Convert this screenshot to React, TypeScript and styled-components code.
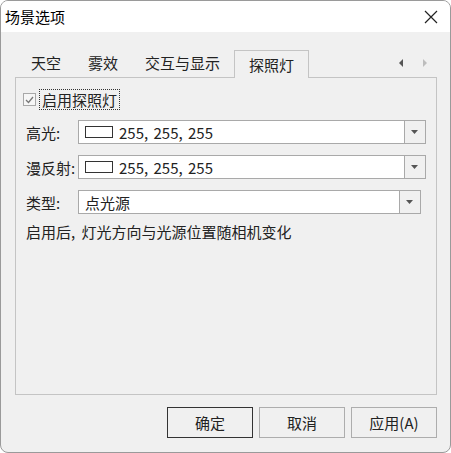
import styled, { createGlobalStyle } from 'styled-components'

const GlobalStyle = createGlobalStyle`
  html, body {
    margin: 0;
    padding: 0;
    background: #ffffff;
  }
  body {
    font-family: "Noto Sans CJK SC", "Noto Sans", sans-serif;
    color: #1a1a1a;
  }
`

const Window = styled.div`
  box-sizing: border-box;
  width: 451px;
  height: 453px;
  border: 1px solid #9a9a9a;
  border-radius: 8px;
  overflow: hidden;
  background: #f0f0f0;
  display: flex;
  flex-direction: column;
`

const TitleBar = styled.div`
  height: 31px;
  background: #ffffff;
  display: flex;
  align-items: center;
  justify-content: space-between;
  padding: 0 12px 0 4px;
  flex-shrink: 0;
`

const Title = styled.span`
  font-size: 15px;
  line-height: 20px;
  color: #000;
`

const CloseButton = styled.svg`
  width: 14px;
  height: 14px;
`

const Body = styled.div`
  flex: 1;
  display: flex;
  flex-direction: column;
  padding: 17px 14px 0 14px;
`

const TabRow = styled.div`
  display: flex;
  align-items: flex-end;
  height: 28px;
  padding-left: 2.5px;
  position: relative;
`

const Tab = styled.div<{ $active?: boolean }>`
  box-sizing: border-box;
  height: 28px;
  padding: 0 ${p => (p.$active ? '14px' : '13.5px')};
  margin-left: ${p => (p.$active ? 0.5 : 0)}px;
  font-size: 15px;
  line-height: 27px;
  color: #222;
  border: ${p => (p.$active ? '1px solid #c4c4c4' : 'none')};
  border-bottom: none;
  background: ${p => (p.$active ? '#f0f0f0' : 'transparent')};
  margin-bottom: ${p => (p.$active ? -1 : 0)}px;
  position: relative;
  z-index: 1;
`

const TabScroll = styled.div`
  margin-left: auto;
  display: flex;
  gap: 16px;
  align-self: center;
  padding-right: 7px;
`

const Arrow = styled.svg`
  width: 8px;
  height: 8px;
`

const Panel = styled.div`
  box-sizing: border-box;
  width: 422px;
  height: 318px;
  border: 1px solid #c4c4c4;
  padding: 11px 9px 0 7px;
  display: flex;
  flex-direction: column;
`

const CheckRow = styled.label`
  display: flex;
  align-items: center;
  height: 21px;
`

const CheckBox = styled.span`
  box-sizing: border-box;
  width: 13px;
  height: 13px;
  border: 1px solid #a8a8a8;
  background: #f6f6f6;
  display: flex;
  align-items: center;
  justify-content: center;
`

const FocusLabel = styled.span`
  margin-left: 3px;
  padding: 0 2px;
  border: 1px dotted #333;
  font-size: 15px;
  line-height: 19px;
  color: #222;
`

const FieldRow = styled.div<{ $top: number }>`
  display: flex;
  align-items: center;
  margin-top: ${p => p.$top}px;
  height: 24px;
`

const Label = styled.span`
  box-sizing: border-box;
  flex-shrink: 0;
  width: 55px;
  padding-left: 3px;
  font-size: 15px;
  color: #222;
  white-space: nowrap;
`

const Combo = styled.div<{ $width: number }>`
  box-sizing: border-box;
  width: ${p => p.$width}px;
  height: 24px;
  border: 1px solid #a9a9a9;
  background: #fff;
  display: flex;
  align-items: stretch;
`

const ComboValue = styled.div`
  flex: 1;
  display: flex;
  align-items: center;
  padding-left: 6px;
  font-size: 15px;
  color: #222;
  word-spacing: 2px;
`

const Swatch = styled.span`
  box-sizing: border-box;
  width: 28px;
  height: 12px;
  border: 1px solid #333;
  background: #fff;
  margin-right: 6px;
`

const DropButton = styled.div`
  width: 20px;
  border-left: 1px solid #a9a9a9;
  background: #f0f0f0;
  display: flex;
  align-items: center;
  justify-content: center;
`

const Description = styled.div`
  margin-top: 8px;
  padding-left: 3px;
  font-size: 15px;
  line-height: 20px;
  color: #222;
  word-spacing: 3px;
`

const ButtonRow = styled.div`
  display: flex;
  justify-content: flex-end;
  gap: 6px;
  margin-top: 12px;
  width: 422px;
`

const Button = styled.div<{ $primary?: boolean }>`
  box-sizing: border-box;
  width: 86px;
  height: 31px;
  border: 1px solid ${p => (p.$primary ? '#333' : '#adadad')};
  background: #f0f0f0;
  display: flex;
  align-items: center;
  justify-content: center;
  font-size: 15px;
  color: #222;
`

const Caret = () => (
  <svg width="8" height="5" viewBox="0 0 8 5">
    <path d="M0 0 H7 L3.5 4 Z" fill="#555" />
  </svg>
)

const ColorCombo = ({ value }: { value: string }) => (
  <Combo $width={348}>
    <ComboValue>
      <Swatch />
      {value}
    </ComboValue>
    <DropButton>
      <Caret />
    </DropButton>
  </Combo>
)

export default function App() {
  return (
    <>
      <GlobalStyle />
      <Window>
        <TitleBar>
          <Title>场景选项</Title>
          <CloseButton viewBox="0 0 14 14">
            <path d="M1 1 L13 13 M13 1 L1 13" stroke="#222" strokeWidth="1.2" />
          </CloseButton>
        </TitleBar>
        <Body>
          <TabRow>
            <Tab>天空</Tab>
            <Tab>雾效</Tab>
            <Tab>交互与显示</Tab>
            <Tab $active>探照灯</Tab>
            <TabScroll>
              <Arrow viewBox="0 0 8 8">
                <path d="M6 0 V8 L2 4 Z" fill="#555" />
              </Arrow>
              <Arrow viewBox="0 0 8 8">
                <path d="M2 0 V8 L6 4 Z" fill="#bdbdbd" />
              </Arrow>
            </TabScroll>
          </TabRow>
          <Panel>
            <CheckRow>
              <CheckBox>
                <svg width="9" height="8" viewBox="0 0 9 8">
                  <path d="M1 4 L3.5 6.5 L8 1" stroke="#777" strokeWidth="1.3" fill="none" />
                </svg>
              </CheckBox>
              <FocusLabel>启用探照灯</FocusLabel>
            </CheckRow>
            <FieldRow $top={10}>
              <Label>高光:</Label>
              <ColorCombo value="255, 255, 255" />
            </FieldRow>
            <FieldRow $top={11}>
              <Label>漫反射:</Label>
              <ColorCombo value="255, 255, 255" />
            </FieldRow>
            <FieldRow $top={11}>
              <Label>类型:</Label>
              <Combo $width={343}>
                <ComboValue>点光源</ComboValue>
                <DropButton>
                  <Caret />
                </DropButton>
              </Combo>
            </FieldRow>
            <Description>启用后, 灯光方向与光源位置随相机变化</Description>
          </Panel>
          <ButtonRow>
            <Button $primary>确定</Button>
            <Button>取消</Button>
            <Button>应用(A)</Button>
          </ButtonRow>
        </Body>
      </Window>
    </>
  )
}
